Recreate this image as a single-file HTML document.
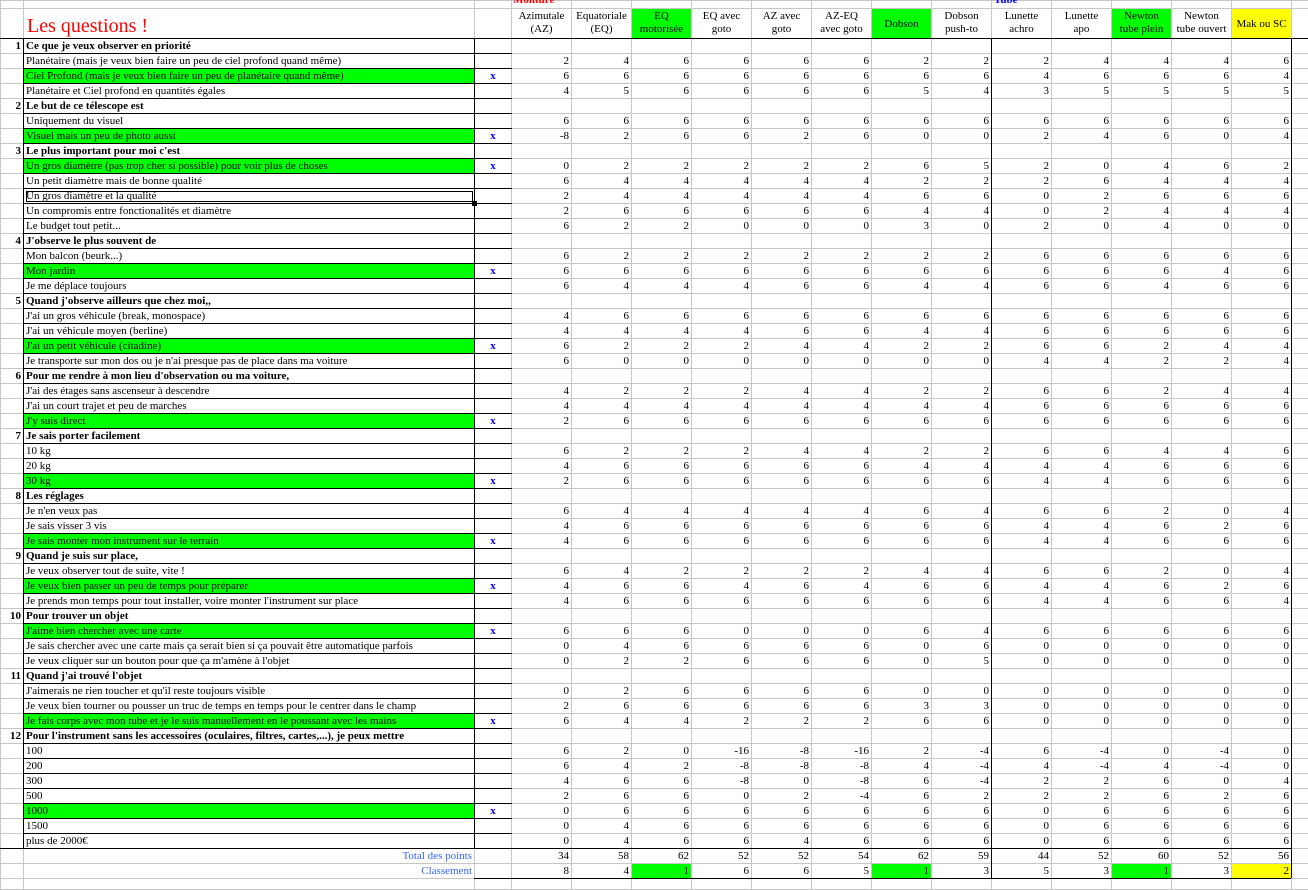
<!DOCTYPE html>
<html><head><meta charset="utf-8">
<style>
body{margin:0;width:1308px;height:889px;overflow:hidden;background:#fff;position:relative}
table{border-collapse:collapse;table-layout:fixed;position:absolute;left:0;top:0;width:1308px;font:11px "Liberation Serif",serif;color:#000}
tr{height:15px}
td{padding:0 2px;border:1px solid #c6c6c6;text-align:right;white-space:nowrap;overflow:hidden;line-height:13px;vertical-align:middle}
td.a{font-weight:bold;border-right:1px solid #000}
td.b{text-align:left;border:1px solid #000}
td.c{text-align:center;border-top:1px solid #000;border-bottom:1px solid #000;border-right:1px solid #c6c6c6;color:#00f;font-weight:bold}
tr.g td.b{background:#0f0}
tr.s td.b{font-weight:bold}
tr.h{height:30px}
tr.h td{text-align:center;vertical-align:top;line-height:13px;padding-top:1px;font-size:11px}
tr.h td.t{text-align:left;vertical-align:bottom;color:#f00;font-size:20px;line-height:24px;padding-left:3px;border:1px solid #c6c6c6}
.gr{background:#0f0}.ye{background:#ff0}
td.lab{text-align:right;color:#3366ff;border:1px solid #c6c6c6}
.ln{position:absolute;background:#000}
</style></head><body>
<table>
<colgroup><col style="width:23px"><col style="width:451px"><col style="width:37px"><col style="width:60px"><col style="width:60px"><col style="width:60px"><col style="width:60px"><col style="width:60px"><col style="width:60px"><col style="width:60px"><col style="width:60px"><col style="width:60px"><col style="width:60px"><col style="width:60px"><col style="width:60px"><col style="width:60px"><col style="width:17px"></colgroup>
<tr style="height:8px"><td style="border-right-color:#c6c6c6"><td style="border-color:#c6c6c6"><td style="border-color:#c6c6c6"><td><td><td><td><td><td><td><td><td><td><td><td><td><td>
<tr class=h><td style="border-right-color:#c6c6c6"><td class=t>Les questions !<td><td>Azimutale<br>(AZ)<td>Equatoriale<br>(EQ)<td class=gr>EQ<br>motorisée<td>EQ avec<br>goto<td>AZ avec<br>goto<td>AZ-EQ<br>avec goto<td class=gr style="vertical-align:middle">Dobson<td>Dobson<br>push-to<td>Lunette<br>achro<td>Lunette<br>apo<td class=gr>Newton<br>tube plein<td>Newton<br>tube ouvert<td class=ye style="vertical-align:middle">Mak ou SC<td>
<tr class=s><td class=a>1<td class=b>Ce que je veux observer en priorité<td class=c><td><td><td><td><td><td><td><td><td><td><td><td><td><td>
<tr><td class=a><td class=b>Planétaire (mais je veux bien faire un peu de ciel profond quand même)<td class=c><td>2<td>4<td>6<td>6<td>6<td>6<td>2<td>2<td>2<td>4<td>4<td>4<td>6<td>
<tr class=g><td class=a><td class=b>Ciel Profond (mais je veux bien faire un peu de planétaire quand même)<td class=c>x<td>6<td>6<td>6<td>6<td>6<td>6<td>6<td>6<td>4<td>6<td>6<td>6<td>4<td>
<tr><td class=a><td class=b>Planétaire et Ciel profond en quantités égales<td class=c><td>4<td>5<td>6<td>6<td>6<td>6<td>5<td>4<td>3<td>5<td>5<td>5<td>5<td>
<tr class=s><td class=a>2<td class=b>Le but de ce télescope est<td class=c><td><td><td><td><td><td><td><td><td><td><td><td><td><td>
<tr><td class=a><td class=b>Uniquement du visuel<td class=c><td>6<td>6<td>6<td>6<td>6<td>6<td>6<td>6<td>6<td>6<td>6<td>6<td>6<td>
<tr class=g><td class=a><td class=b>Visuel mais un peu de photo aussi<td class=c>x<td>-8<td>2<td>6<td>6<td>2<td>6<td>0<td>0<td>2<td>4<td>6<td>0<td>4<td>
<tr class=s><td class=a>3<td class=b>Le plus important pour moi c'est<td class=c><td><td><td><td><td><td><td><td><td><td><td><td><td><td>
<tr class=g><td class=a><td class=b>Un gros diamètre (pas trop cher si possible) pour voir plus de choses<td class=c>x<td>0<td>2<td>2<td>2<td>2<td>2<td>6<td>5<td>2<td>0<td>4<td>6<td>2<td>
<tr><td class=a><td class=b>Un petit diamètre mais de bonne qualité<td class=c><td>6<td>4<td>4<td>4<td>4<td>4<td>2<td>2<td>2<td>6<td>4<td>4<td>4<td>
<tr><td class=a><td class=b style="outline:1px solid #000;outline-offset:-3px">Un gros diamètre et la qualité<td class=c><td>2<td>4<td>4<td>4<td>4<td>4<td>6<td>6<td>0<td>2<td>6<td>6<td>6<td>
<tr><td class=a><td class=b>Un compromis entre fonctionalités et diamètre<td class=c><td>2<td>6<td>6<td>6<td>6<td>6<td>4<td>4<td>0<td>2<td>4<td>4<td>4<td>
<tr><td class=a><td class=b>Le budget tout petit...<td class=c><td>6<td>2<td>2<td>0<td>0<td>0<td>3<td>0<td>2<td>0<td>4<td>0<td>0<td>
<tr class=s><td class=a>4<td class=b>J'observe le plus souvent de<td class=c><td><td><td><td><td><td><td><td><td><td><td><td><td><td>
<tr><td class=a><td class=b>Mon balcon (beurk...)<td class=c><td>6<td>2<td>2<td>2<td>2<td>2<td>2<td>2<td>6<td>6<td>6<td>6<td>6<td>
<tr class=g><td class=a><td class=b>Mon jardin<td class=c>x<td>6<td>6<td>6<td>6<td>6<td>6<td>6<td>6<td>6<td>6<td>6<td>4<td>6<td>
<tr><td class=a><td class=b>Je me déplace toujours<td class=c><td>6<td>4<td>4<td>4<td>6<td>6<td>4<td>4<td>6<td>6<td>4<td>6<td>6<td>
<tr class=s><td class=a>5<td class=b>Quand j'observe ailleurs que chez moi,,<td class=c><td><td><td><td><td><td><td><td><td><td><td><td><td><td>
<tr><td class=a><td class=b>J'ai un gros véhicule (break, monospace)<td class=c><td>4<td>6<td>6<td>6<td>6<td>6<td>6<td>6<td>6<td>6<td>6<td>6<td>6<td>
<tr><td class=a><td class=b>J'ai un véhicule moyen (berline)<td class=c><td>4<td>4<td>4<td>4<td>6<td>6<td>4<td>4<td>6<td>6<td>6<td>6<td>6<td>
<tr class=g><td class=a><td class=b>J'ai un petit véhicule (citadine)<td class=c>x<td>6<td>2<td>2<td>2<td>4<td>4<td>2<td>2<td>6<td>6<td>2<td>4<td>4<td>
<tr><td class=a><td class=b>Je transporte sur mon dos ou je n'ai presque pas de place dans ma voiture<td class=c><td>6<td>0<td>0<td>0<td>0<td>0<td>0<td>0<td>4<td>4<td>2<td>2<td>4<td>
<tr class=s><td class=a>6<td class=b>Pour me rendre à mon lieu d'observation ou ma voiture,<td class=c><td><td><td><td><td><td><td><td><td><td><td><td><td><td>
<tr><td class=a><td class=b>J'ai des étages sans ascenseur à descendre<td class=c><td>4<td>2<td>2<td>2<td>4<td>4<td>2<td>2<td>6<td>6<td>2<td>4<td>4<td>
<tr><td class=a><td class=b>J'ai un court trajet et peu de marches<td class=c><td>4<td>4<td>4<td>4<td>4<td>4<td>4<td>4<td>6<td>6<td>6<td>6<td>6<td>
<tr class=g><td class=a><td class=b>J'y suis direct<td class=c>x<td>2<td>6<td>6<td>6<td>6<td>6<td>6<td>6<td>6<td>6<td>6<td>6<td>6<td>
<tr class=s><td class=a>7<td class=b>Je sais porter facilement<td class=c><td><td><td><td><td><td><td><td><td><td><td><td><td><td>
<tr><td class=a><td class=b>10 kg<td class=c><td>6<td>2<td>2<td>2<td>4<td>4<td>2<td>2<td>6<td>6<td>4<td>4<td>6<td>
<tr><td class=a><td class=b>20 kg<td class=c><td>4<td>6<td>6<td>6<td>6<td>6<td>4<td>4<td>4<td>4<td>6<td>6<td>6<td>
<tr class=g><td class=a><td class=b>30 kg<td class=c>x<td>2<td>6<td>6<td>6<td>6<td>6<td>6<td>6<td>4<td>4<td>6<td>6<td>6<td>
<tr class=s><td class=a>8<td class=b>Les réglages<td class=c><td><td><td><td><td><td><td><td><td><td><td><td><td><td>
<tr><td class=a><td class=b>Je n'en veux pas<td class=c><td>6<td>4<td>4<td>4<td>4<td>4<td>6<td>4<td>6<td>6<td>2<td>0<td>4<td>
<tr><td class=a><td class=b>Je sais visser 3 vis<td class=c><td>4<td>6<td>6<td>6<td>6<td>6<td>6<td>6<td>4<td>4<td>6<td>2<td>6<td>
<tr class=g><td class=a><td class=b>Je sais monter mon instrument sur le terrain<td class=c>x<td>4<td>6<td>6<td>6<td>6<td>6<td>6<td>6<td>4<td>4<td>6<td>6<td>6<td>
<tr class=s><td class=a>9<td class=b>Quand je suis sur place,<td class=c><td><td><td><td><td><td><td><td><td><td><td><td><td><td>
<tr><td class=a><td class=b>Je veux observer tout de suite, vite !<td class=c><td>6<td>4<td>2<td>2<td>2<td>2<td>4<td>4<td>6<td>6<td>2<td>0<td>4<td>
<tr class=g><td class=a><td class=b>Je veux bien passer un peu de temps pour préparer<td class=c>x<td>4<td>6<td>6<td>4<td>6<td>4<td>6<td>6<td>4<td>4<td>6<td>2<td>6<td>
<tr><td class=a><td class=b>Je prends mon temps pour tout installer, voire monter l'instrument sur place<td class=c><td>4<td>6<td>6<td>6<td>6<td>6<td>6<td>6<td>4<td>4<td>6<td>6<td>4<td>
<tr class=s><td class=a>10<td class=b>Pour trouver un objet<td class=c><td><td><td><td><td><td><td><td><td><td><td><td><td><td>
<tr class=g><td class=a><td class=b>J'aime bien chercher avec une carte<td class=c>x<td>6<td>6<td>6<td>0<td>0<td>0<td>6<td>4<td>6<td>6<td>6<td>6<td>6<td>
<tr><td class=a><td class=b>Je sais chercher avec une carte mais ça serait bien si ça pouvait être automatique parfois<td class=c><td>0<td>4<td>6<td>6<td>6<td>6<td>0<td>6<td>0<td>0<td>0<td>0<td>0<td>
<tr><td class=a><td class=b>Je veux cliquer sur un bouton pour que ça m'amène à l'objet<td class=c><td>0<td>2<td>2<td>6<td>6<td>6<td>0<td>5<td>0<td>0<td>0<td>0<td>0<td>
<tr class=s><td class=a>11<td class=b>Quand j'ai trouvé l'objet<td class=c><td><td><td><td><td><td><td><td><td><td><td><td><td><td>
<tr><td class=a><td class=b>J'aimerais ne rien toucher et qu'il reste toujours visible<td class=c><td>0<td>2<td>6<td>6<td>6<td>6<td>0<td>0<td>0<td>0<td>0<td>0<td>0<td>
<tr><td class=a><td class=b>Je veux bien tourner ou pousser un truc de temps en temps pour le centrer dans le champ<td class=c><td>2<td>6<td>6<td>6<td>6<td>6<td>3<td>3<td>0<td>0<td>0<td>0<td>0<td>
<tr class=g><td class=a><td class=b>Je fais corps avec mon tube et je le suis manuellement en le poussant avec les mains<td class=c>x<td>6<td>4<td>4<td>2<td>2<td>2<td>6<td>6<td>0<td>0<td>0<td>0<td>0<td>
<tr class=s><td class=a>12<td class=b>Pour l'instrument sans les accessoires (oculaires, filtres, cartes,...), je peux mettre<td class=c><td><td><td><td><td><td><td><td><td><td><td><td><td><td>
<tr><td class=a><td class=b>100<td class=c><td>6<td>2<td>0<td>-16<td>-8<td>-16<td>2<td>-4<td>6<td>-4<td>0<td>-4<td>0<td>
<tr><td class=a><td class=b>200<td class=c><td>6<td>4<td>2<td>-8<td>-8<td>-8<td>4<td>-4<td>4<td>-4<td>4<td>-4<td>0<td>
<tr><td class=a><td class=b>300<td class=c><td>4<td>6<td>6<td>-8<td>0<td>-8<td>6<td>-4<td>2<td>2<td>6<td>0<td>4<td>
<tr><td class=a><td class=b>500<td class=c><td>2<td>6<td>6<td>0<td>2<td>-4<td>6<td>2<td>2<td>2<td>6<td>2<td>6<td>
<tr class=g><td class=a><td class=b>1000<td class=c>x<td>0<td>6<td>6<td>6<td>6<td>6<td>6<td>6<td>0<td>6<td>6<td>6<td>6<td>
<tr><td class=a><td class=b>1500<td class=c><td>0<td>4<td>6<td>6<td>6<td>6<td>6<td>6<td>0<td>6<td>6<td>6<td>6<td>
<tr><td class=a><td class=b>plus de 2000€<td class=c><td>0<td>4<td>6<td>6<td>4<td>6<td>6<td>6<td>0<td>6<td>6<td>6<td>6<td>
<tr><td style="border-right-color:#c6c6c6"><td class=lab>Total des points<td style="border-color:#c6c6c6"><td>34<td>58<td>62<td>52<td>52<td>54<td>62<td>59<td>44<td>52<td>60<td>52<td>56<td>
<tr><td style="border-right-color:#c6c6c6"><td class=lab>Classement<td style="border-color:#c6c6c6"><td>8<td>4<td class=gr>1<td>6<td>6<td>5<td class=gr>1<td>3<td>5<td>3<td class=gr>1<td>3<td class=ye>2<td>
<tr style="height:11px"><td style="border-right-color:#c6c6c6"><td style="border-color:#c6c6c6"><td style="border-color:#c6c6c6"><td><td><td><td><td><td><td><td><td><td><td><td><td><td>
</table>
<div style="position:absolute;left:513px;top:0;height:8px;width:70px;overflow:hidden"><div style="position:relative;top:-6px;font:bold 11px 'Liberation Serif',serif;color:#f00">Monture</div></div>
<div style="position:absolute;left:994px;top:0;height:8px;width:60px;overflow:hidden"><div style="position:relative;top:-6px;font:bold 11px 'Liberation Serif',serif;color:#00f">Tube</div></div>
<div class=ln style="left:0;top:38px;width:1308px;height:1px"></div>
<div class=ln style="left:0;top:848px;width:1291px;height:1px"></div>
<div class=ln style="left:474px;top:878px;width:817px;height:1px"></div>
<div class=ln style="left:23px;top:38px;width:1px;height:810px"></div>
<div class=ln style="left:474px;top:38px;width:1px;height:810px"></div>
<div class=ln style="left:991px;top:38px;width:1px;height:840px"></div>
<div class=ln style="left:1291px;top:38px;width:1px;height:840px"></div>
<div class=ln style="left:472px;top:201px;width:5px;height:5px"></div>
</body></html>
